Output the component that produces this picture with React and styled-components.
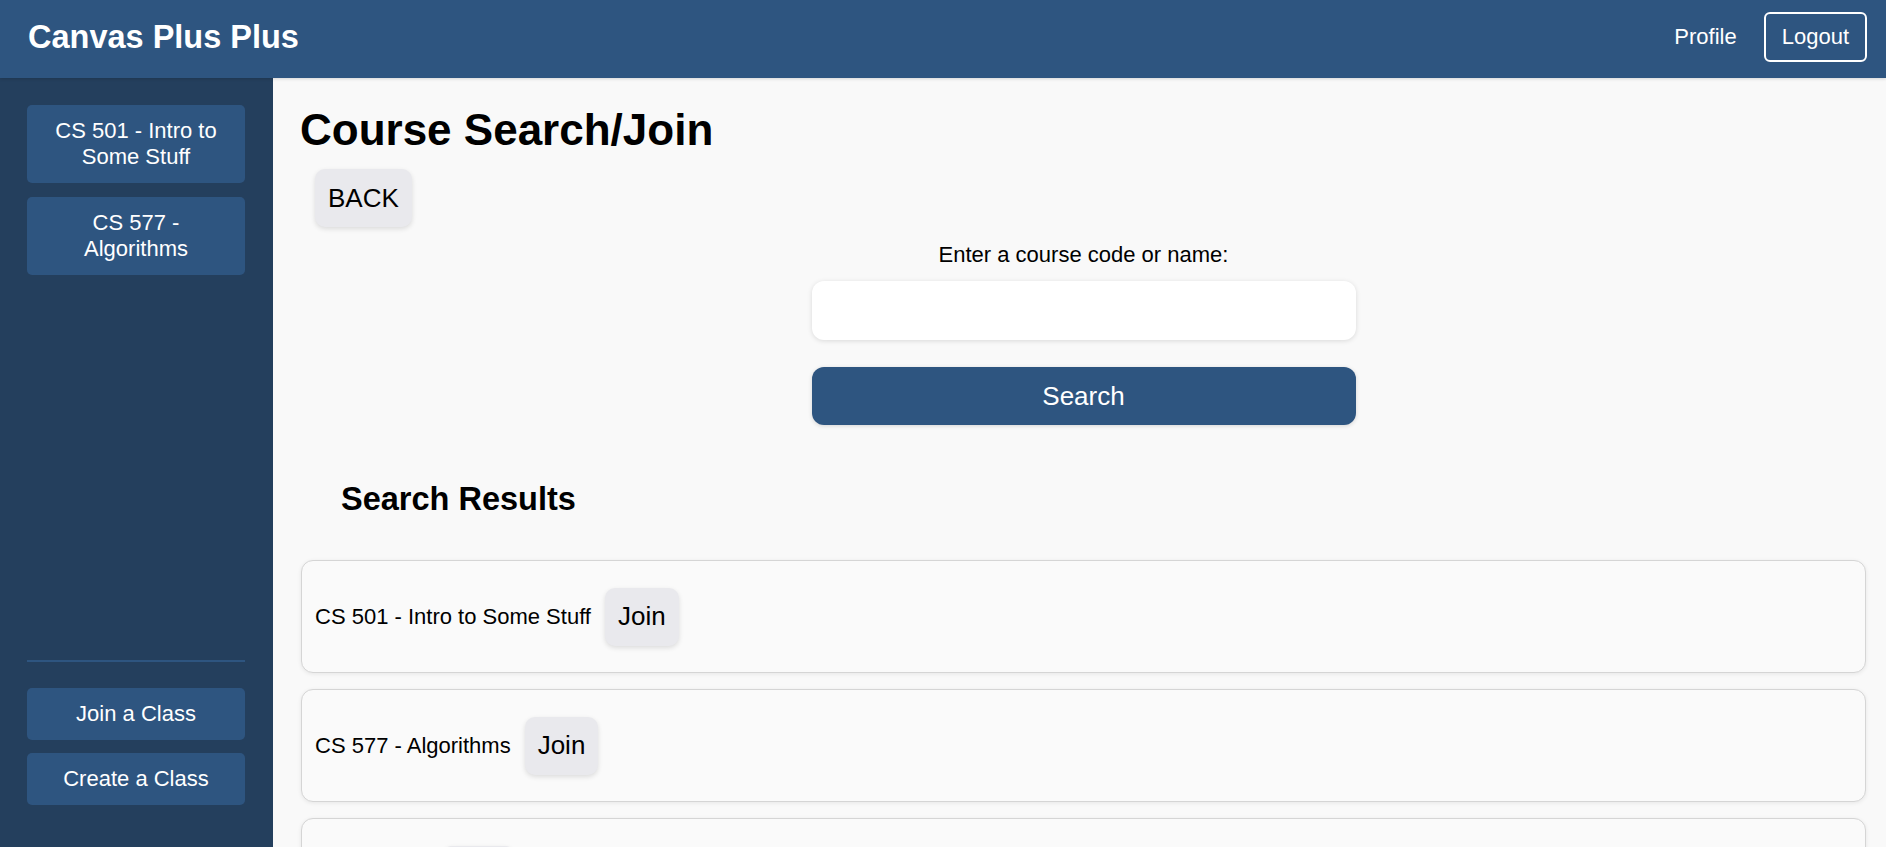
import React from "react";
import styled, { createGlobalStyle } from "styled-components";

const GlobalStyle = createGlobalStyle`
  html, body { margin: 0; padding: 0; }
  body {
    font-family: "Liberation Sans", Arial, sans-serif;
    background: #f9f9f9;
    color: #000;
    overflow: hidden;
  }
  * { box-sizing: border-box; }
`;

const Page = styled.div`
  display: flex;
  flex-direction: column;
  height: 100vh;
`;

const Header = styled.header`
  height: 78px;
  flex: none;
  display: flex;
  align-items: center;
  justify-content: space-between;
  padding: 0 19px 4px 28px;
  background: #2e5580;
  box-shadow: 0 1px 3px rgba(0, 0, 0, 0.15);
  position: relative;
  z-index: 1;
`;

const Brand = styled.h1`
  margin: 0;
  font-size: 32.5px;
  font-weight: 700;
  color: #fff;
`;

const Nav = styled.nav`
  display: flex;
  align-items: center;
  gap: 27px;
`;

const NavLink = styled.a`
  color: #fff;
  font-size: 22px;
  text-decoration: none;
  cursor: pointer;
`;

const OutlineButton = styled.button`
  font-family: inherit;
  font-size: 22px;
  color: #fff;
  background: transparent;
  border: 2px solid #fff;
  border-radius: 6px;
  padding: 10px 16px;
  line-height: normal;
  cursor: pointer;
`;

const Body = styled.div`
  flex: 1;
  display: flex;
  min-height: 0;
`;

const Sidebar = styled.aside`
  width: 273px;
  flex: none;
  background: #243f5d;
  padding: 27px 28px 42px 27px;
  display: flex;
  flex-direction: column;
  justify-content: space-between;
`;

const SideGroup = styled.div`
  display: flex;
  flex-direction: column;
  gap: ${(p) => p.$gap || 14}px;
`;

const SideButton = styled.button`
  font-family: inherit;
  font-size: 22px;
  line-height: normal;
  color: #fff;
  background: #2e5580;
  border: none;
  border-radius: 5px;
  padding: 13px 16px;
  text-align: center;
  cursor: pointer;
`;

const Divider = styled.hr`
  border: none;
  height: 2px;
  background: #2e5580;
  margin: 0 0 26px 0;
`;

const Main = styled.main`
  flex: 1;
  min-width: 0;
  padding: 27px 20px 0 28px;
  overflow: hidden;
`;

const Title = styled.h1`
  margin: 0 0 14px -1px;
  font-size: 44px;
  font-weight: 700;
  line-height: normal;
`;

const GreyButton = styled.button`
  font-family: inherit;
  font-size: 26px;
  line-height: normal;
  color: #000;
  background: #e9e9ed;
  border: none;
  border-radius: 10px;
  padding: 13.5px 13px;
  box-shadow: 0 2px 5px rgba(0, 0, 0, 0.12);
  cursor: pointer;
`;

const BackRow = styled.div`
  padding-left: 14px;
`;

const SearchForm = styled.form`
  display: flex;
  flex-direction: column;
  align-items: center;
  margin-top: 15px;
`;

const Label = styled.label`
  font-size: 22px;
  line-height: normal;
  margin-bottom: 13px;
`;

const Input = styled.input`
  width: 544px;
  height: 59px;
  border: none;
  border-radius: 12px;
  background: #fff;
  box-shadow: 0 1px 5px rgba(0, 0, 0, 0.13);
  font-size: 22px;
  font-family: inherit;
  padding: 0 16px;
  outline: none;
`;

const PrimaryButton = styled.button`
  width: 544px;
  height: 58px;
  margin-top: 27px;
  border: none;
  border-radius: 12px;
  background: #2e5580;
  color: #fff;
  font-family: inherit;
  font-size: 26px;
  box-shadow: 0 1px 4px rgba(0, 0, 0, 0.15);
  cursor: pointer;
`;

const SectionTitle = styled.h2`
  margin: 56px 0 42px 40px;
  font-size: 32.5px;
  font-weight: 700;
  line-height: normal;
`;

const ResultList = styled.div`
  display: flex;
  flex-direction: column;
  gap: 16px;
`;

const ResultCard = styled.div`
  display: flex;
  align-items: center;
  gap: 14px;
  min-height: 113px;
  padding: 0 13px;
  background: #fafafa;
  border: 1px solid #d5d5d5;
  border-radius: 12px;
  box-shadow: 0 1px 4px rgba(0, 0, 0, 0.08);
`;

const CourseName = styled.span`
  font-size: 22px;
`;

const sideCourses = ["CS 501 - Intro to Some Stuff", "CS 577 - Algorithms"];
const results = [
  "CS 501 - Intro to Some Stuff",
  "CS 577 - Algorithms",
  "CS 330 - AI",
];

export default function App() {
  return (
    <Page>
      <GlobalStyle />
      <Header>
        <Brand>Canvas Plus Plus</Brand>
        <Nav>
          <NavLink>Profile</NavLink>
          <OutlineButton>Logout</OutlineButton>
        </Nav>
      </Header>
      <Body>
        <Sidebar>
          <SideGroup>
            {sideCourses.map((c) => (
              <SideButton key={c}>{c}</SideButton>
            ))}
          </SideGroup>
          <div>
            <Divider />
            <SideGroup $gap={13}>
              <SideButton>Join a Class</SideButton>
              <SideButton>Create a Class</SideButton>
            </SideGroup>
          </div>
        </Sidebar>
        <Main>
          <Title>Course Search/Join</Title>
          <BackRow>
            <GreyButton>BACK</GreyButton>
          </BackRow>
          <SearchForm onSubmit={(e) => e.preventDefault()}>
            <Label htmlFor="q">Enter a course code or name:</Label>
            <Input id="q" type="text" />
            <PrimaryButton type="submit">Search</PrimaryButton>
          </SearchForm>
          <SectionTitle>Search Results</SectionTitle>
          <ResultList>
            {results.map((r) => (
              <ResultCard key={r}>
                <CourseName>{r}</CourseName>
                <GreyButton>Join</GreyButton>
              </ResultCard>
            ))}
          </ResultList>
        </Main>
      </Body>
    </Page>
  );
}
